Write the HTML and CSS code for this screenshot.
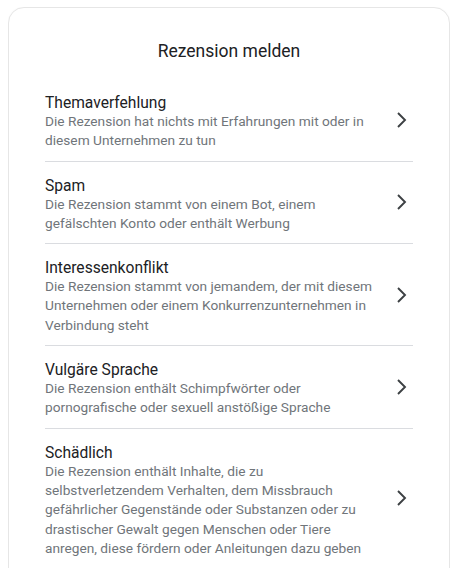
FILE: index.html
```html
<!DOCTYPE html>
<html>
<head>
  <title>Rezension melden</title>
  <link rel="stylesheet" href="styles.css">
</head>
<body>
  <div class="report-card">
    <h1 class="heading">Rezension melden</h1>
    <ul class="reason-list">
      <li class="reason">
        <div class="reason-text">
          <div class="reason-title">Themaverfehlung</div>
          <div class="reason-desc">Die Rezension hat nichts mit Erfahrungen mit oder in diesem Unternehmen zu tun</div>
        </div>
        <svg class="chevron" viewBox="0 0 24 24"><path d="M9 5l7 7-7 7"/></svg>
      </li>
      <li class="reason">
        <div class="reason-text">
          <div class="reason-title">Spam</div>
          <div class="reason-desc">Die Rezension stammt von einem Bot, einem gefälschten Konto oder enthält Werbung</div>
        </div>
        <svg class="chevron" viewBox="0 0 24 24"><path d="M9 5l7 7-7 7"/></svg>
      </li>
      <li class="reason">
        <div class="reason-text">
          <div class="reason-title">Interessenkonflikt</div>
          <div class="reason-desc">Die Rezension stammt von jemandem, der mit diesem Unternehmen oder einem Konkurrenzunternehmen in Verbindung steht</div>
        </div>
        <svg class="chevron" viewBox="0 0 24 24"><path d="M9 5l7 7-7 7"/></svg>
      </li>
      <li class="reason">
        <div class="reason-text">
          <div class="reason-title">Vulgäre Sprache</div>
          <div class="reason-desc">Die Rezension enthält Schimpfwörter oder pornografische oder sexuell anstößige Sprache</div>
        </div>
        <svg class="chevron" viewBox="0 0 24 24"><path d="M9 5l7 7-7 7"/></svg>
      </li>
      <li class="reason">
        <div class="reason-text">
          <div class="reason-title">Schädlich</div>
          <div class="reason-desc">Die Rezension enthält Inhalte, die zu selbstverletzendem Verhalten, dem Missbrauch gefährlicher Gegenstände oder Substanzen oder zu drastischer Gewalt gegen Menschen oder Tiere anregen, diese fördern oder Anleitungen dazu geben</div>
        </div>
        <svg class="chevron" viewBox="0 0 24 24"><path d="M9 5l7 7-7 7"/></svg>
      </li>
    </ul>
  </div>
</body>
</html>
```

FILE: styles.css
```css
/* Rezension melden dialog */
body {
  font-family: Roboto, "Liberation Sans", Arial, sans-serif;
  background-color: #fff;
  margin: 7px 10px 0 8px;
}

.report-card {
  background-color: #fff;
  border: 1px solid #e6e6e6;
  border-radius: 16px;
  padding: 31px 36px 24px;
  box-shadow: 0 0 2px rgba(0, 0, 0, 0.04);
}

.heading {
  margin: 0 0 16px;
  text-align: center;
  font-size: 17.5px;
  line-height: 24px;
  font-weight: 400;
  color: #202124;
}

.reason-list {
  list-style: none;
  margin: 0;
  padding: 0;
}

.reason {
  display: flex;
  align-items: center;
  padding: 12.5px 0;
  border-bottom: 1px solid #dadce0;
}

.reason:last-child {
  border-bottom: none;
}

/* text sits a little low in its row, chevron stays centred */
.reason-text {
  flex: 1;
  padding-right: 12px;
  margin: 2.5px 0 -2.5px;
}

.reason-title {
  font-size: 15.6px;
  line-height: 18px;
  color: #202124;
}

.reason-desc {
  font-size: 13.7px;
  line-height: 19.3px;
  color: #70757a;
}

.chevron {
  width: 24px;
  height: 24px;
  flex-shrink: 0;
  fill: none;
  stroke: #3c4043;
  stroke-width: 1.9;
}
```
